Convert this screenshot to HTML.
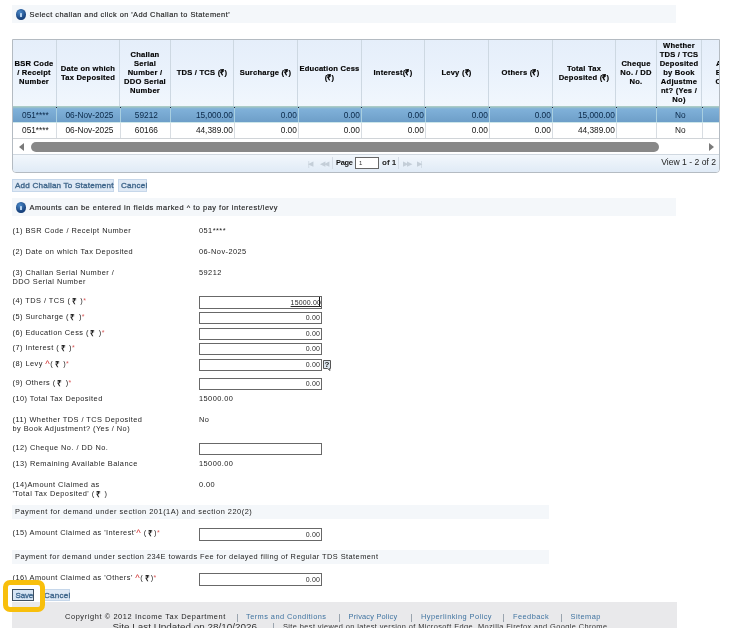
<!DOCTYPE html><html><head><meta charset="utf-8"><style>
*{margin:0;padding:0;box-sizing:border-box}
html,body{width:741px;height:628px;overflow:hidden;background:#fff;font-family:"Liberation Sans",sans-serif;color:#333}
.a{position:absolute;white-space:nowrap}
.info{position:absolute;left:12px;width:664px;height:18px;background:#f4f7fa}
.ic{position:absolute;left:4px;width:9.5px;height:10.5px;border-radius:50%;background:radial-gradient(circle at 40% 30%,#4a88c8,#1a4580 65%,#153a6e 100%)}
.ic:after{content:"";position:absolute;left:4px;top:3.5px;width:1.5px;height:4.5px;background:#b8d4f0;border-radius:0.5px}
.it{position:absolute;left:17.5px;top:1px;font-size:7.4px;letter-spacing:0.45px;line-height:18px;color:#1e1e1e;-webkit-text-stroke:0.15px #1e1e1e}
#grid{position:absolute;left:12px;top:39px;width:708px;height:134px;border:1px solid #b4bbc2;border-radius:0 0 4px 4px;overflow:hidden;background:#fff}
.hc{position:absolute;top:0;height:66px;border-right:1px solid #cdd8e2;background:linear-gradient(#e5eefa,#eaf2fc 50%,#f1f7fd);text-align:center;font-weight:bold;font-size:7.6px;letter-spacing:0.22px;line-height:9px;color:#000;-webkit-text-stroke:0.15px #000;white-space:normal;overflow:hidden}
.hc{display:flex;align-items:center;justify-content:center;padding-bottom:1px}
.rw{position:absolute;left:0;width:708px;height:16px}
.sel{height:17px;background:linear-gradient(#b4d2ca 0,#a2c6c4 1px,#8cb9d0 2px,#80b1d9 3px,#6e9fc9 15.5px,#cde6ea 16px)}
.c{position:absolute;top:0;height:16px;line-height:15px;font-size:8.3px;border-right:1px solid #d8dde2;padding:0 1.2px 0 3px;color:#151515;white-space:nowrap;overflow:hidden}
.sel .c{color:#0a2848;border-right-color:#a8cfe0;padding-top:2px}
.r{text-align:right}.m{text-align:center}
.lbl{position:absolute;left:12.5px;font-size:7.4px;letter-spacing:0.45px;line-height:9px;color:#222;white-space:nowrap}
.val{position:absolute;left:199px;font-size:7.4px;letter-spacing:0.45px;line-height:9px;color:#222;white-space:nowrap}
.inp{position:absolute;left:199px;width:123px;height:13px;border:1px solid #686868;background:#fff;font-size:7px;letter-spacing:0.15px;line-height:11px;text-align:right;padding-right:1px;color:#2a2a2a}
.inp u{text-decoration-thickness:1px;text-underline-offset:1px}
.cur{display:inline-block;width:1px;height:9px;background:#111;vertical-align:-1px;margin-left:-2px}
.req{color:#d85a5a;font-size:7px}
.car{color:#d03030;font-size:9.5px;letter-spacing:0;vertical-align:-1px;line-height:0;margin-right:0.5px}
.rs{font-size:8.2px;font-weight:bold;color:#222;margin:0 0.5px 0 1.5px;vertical-align:-1px;line-height:0}
.sec{position:absolute;left:12px;width:537px;height:13px;background:#f4f7fa;font-size:7.4px;letter-spacing:0.52px;line-height:11px;padding-left:3px;color:#222}
.btn{position:absolute;height:12px;background:#dfe9f5;border:1px solid #c6d7ea;color:#41698f;font-size:8.1px;letter-spacing:0.2px;line-height:11px;padding:0 2px;white-space:nowrap;-webkit-text-stroke:0.35px #41698f}
.foot{position:absolute;left:12px;top:602px;width:665px;height:30px;background:#e9e9eb}
.lnk{color:#3d77a8}
</style></head><body><div id="w" style="position:absolute;left:0;top:0;width:741px;height:628px;will-change:transform">
<div class="info" style="top:5px"><div class="ic" style="top:4px"></div><div class="it">Select challan and click on 'Add Challan to Statement'</div></div>
<div id="grid">
<div class="hc" style="left:-1px;width:45px"><span>BSR Code<br>/ Receipt<br>Number</span></div>
<div class="hc" style="left:44px;width:63px"><span>Date on which<br>Tax Deposited</span></div>
<div class="hc" style="left:107px;width:51px"><span>Challan<br>Serial<br>Number /<br>DDO Serial<br>Number</span></div>
<div class="hc" style="left:158px;width:63px"><span>TDS / TCS (&#8377;)</span></div>
<div class="hc" style="left:221px;width:64px"><span>Surcharge (&#8377;)</span></div>
<div class="hc" style="left:285px;width:64px"><span>Education Cess<br>(&#8377;)</span></div>
<div class="hc" style="left:349px;width:63px"><span>Interest(&#8377;)</span></div>
<div class="hc" style="left:412px;width:64px"><span>Levy (&#8377;)</span></div>
<div class="hc" style="left:476px;width:64px"><span>Others (&#8377;)</span></div>
<div class="hc" style="left:540px;width:63px"><span>Total Tax<br>Deposited (&#8377;)</span></div>
<div class="hc" style="left:603px;width:41px"><span>Cheque<br>No. / DD<br>No.</span></div>
<div class="hc" style="left:644px;width:45px"><span>Whether<br>TDS / TCS<br>Deposited<br>by Book<br>Adjustme<br>nt? (Yes /<br>No)</span></div>
<div class="hc" style="left:689px;width:59px"><span>Amount<br>Balance<br>Claimed</span></div>
<div class="rw sel" style="top:66px">
<div class="c m" style="left:0px;width:44px">051****</div>
<div class="c m" style="left:44px;width:64px">06-Nov-2025</div>
<div class="c m" style="left:108px;width:50px">59212</div>
<div class="c r" style="left:158px;width:64px">15,000.00</div>
<div class="c r" style="left:222px;width:64px">0.00</div>
<div class="c r" style="left:286px;width:63px">0.00</div>
<div class="c r" style="left:349px;width:64px">0.00</div>
<div class="c r" style="left:413px;width:64px">0.00</div>
<div class="c r" style="left:477px;width:63px">0.00</div>
<div class="c r" style="left:540px;width:64px">15,000.00</div>
<div class="c m" style="left:604px;width:40px"></div>
<div class="c m" style="left:644px;width:46px">No</div>
<div class="c m" style="left:690px;width:58px"></div>
</div>
<div class="rw" style="top:83px">
<div class="c m" style="left:0px;width:44px">051****</div>
<div class="c m" style="left:44px;width:64px">06-Nov-2025</div>
<div class="c m" style="left:108px;width:50px">60166</div>
<div class="c r" style="left:158px;width:64px">44,389.00</div>
<div class="c r" style="left:222px;width:64px">0.00</div>
<div class="c r" style="left:286px;width:63px">0.00</div>
<div class="c r" style="left:349px;width:64px">0.00</div>
<div class="c r" style="left:413px;width:64px">0.00</div>
<div class="c r" style="left:477px;width:63px">0.00</div>
<div class="c r" style="left:540px;width:64px">44,389.00</div>
<div class="c m" style="left:604px;width:40px"></div>
<div class="c m" style="left:644px;width:46px">No</div>
<div class="c m" style="left:690px;width:58px"></div>
</div>
<div class="a" style="left:43px;top:67px;width:1px;height:1px;background:#223"></div>
<div class="a" style="left:107px;top:67px;width:1px;height:1px;background:#223"></div>
<div class="a" style="left:157px;top:67px;width:1px;height:1px;background:#223"></div>
<div class="a" style="left:221px;top:67px;width:1px;height:1px;background:#223"></div>
<div class="a" style="left:285px;top:67px;width:1px;height:1px;background:#223"></div>
<div class="a" style="left:348px;top:67px;width:1px;height:1px;background:#223"></div>
<div class="a" style="left:412px;top:67px;width:1px;height:1px;background:#223"></div>
<div class="a" style="left:476px;top:67px;width:1px;height:1px;background:#223"></div>
<div class="a" style="left:539px;top:67px;width:1px;height:1px;background:#223"></div>
<div class="a" style="left:603px;top:67px;width:1px;height:1px;background:#223"></div>
<div class="a" style="left:643px;top:67px;width:1px;height:1px;background:#223"></div>
<div class="a" style="left:689px;top:67px;width:1px;height:1px;background:#223"></div>
<div class="a" style="left:0;top:98px;width:708px;height:1px;background:#d0d4d8"></div>
<div class="a" style="left:6px;top:103px;width:0;height:0;border-top:4.5px solid transparent;border-bottom:4.5px solid transparent;border-right:5px solid #7a7a7a"></div>
<div class="a" style="left:18px;top:102px;width:628px;height:10px;border-radius:5px;background:#888"></div>
<div class="a" style="left:696px;top:103px;width:0;height:0;border-top:4.5px solid transparent;border-bottom:4.5px solid transparent;border-left:5px solid #7a7a7a"></div>
<div class="a" style="left:0;top:114px;width:708px;height:1px;background:#d0d8e0"></div>
<div class="a" style="left:0;top:115px;width:708px;height:18px;background:linear-gradient(#f2f7fc,#dfeaf6)"></div>
<div class="a" style="left:295px;top:115px;font-size:6.5px;line-height:17px;color:#c4ced8;letter-spacing:-1.5px">|&#9664;</div>
<div class="a" style="left:307px;top:115px;font-size:6.5px;line-height:17px;color:#c4ced8;letter-spacing:-1.5px">&#9664;&#9664;</div>
<div class="a" style="left:319px;top:117px;width:1px;height:12px;background:#d4dce6"></div>
<div class="a" style="left:323px;top:114px;font-size:7.4px;line-height:17px;font-weight:bold;letter-spacing:-0.3px;color:#111">Page</div>
<div class="a" style="left:342px;top:117px;width:24px;height:12px;border:1px solid #666;background:#fff;font-size:6px;line-height:10px;padding-left:3px;color:#333">1</div>
<div class="a" style="left:369px;top:114px;font-size:8px;line-height:17px;font-weight:bold;color:#222">of 1</div>
<div class="a" style="left:385px;top:117px;width:1px;height:12px;background:#d4dce6"></div>
<div class="a" style="left:390px;top:115px;font-size:6.5px;line-height:17px;color:#c4ced8;letter-spacing:-1.5px">&#9654;&#9654;</div>
<div class="a" style="left:404px;top:115px;font-size:6.5px;line-height:17px;color:#c4ced8;letter-spacing:-1.5px">&#9654;|</div>
<div class="a" style="right:3px;top:114px;font-size:8.6px;line-height:17px;color:#222">View 1 - 2 of 2</div>
</div>
<div class="btn" style="left:12px;top:179px;width:102px;height:13px;line-height:12px;color:#3d5f80">Add Challan To Statement</div>
<div class="btn" style="left:118px;top:179px;width:29px;height:13px;line-height:12px;color:#3d5f80">Cancel</div>
<div class="info" style="top:198px"><div class="ic" style="top:4px"></div><div class="it" style="letter-spacing:0.52px">Amounts can be entered in fields marked ^ to pay for interest/levy</div></div>
<div class="lbl" style="top:226px">(1) BSR Code / Receipt Number</div>
<div class="lbl" style="top:247px">(2) Date on which Tax Deposited</div>
<div class="lbl" style="top:268px">(3) Challan Serial Number /<br>DDO Serial Number</div>
<div class="lbl" style="top:296px">(4) TDS / TCS (<b class="rs">&#8377;</b> )<span class="req">*</span></div>
<div class="lbl" style="top:312px">(5) Surcharge (<b class="rs">&#8377;</b> )<span class="req">*</span></div>
<div class="lbl" style="top:328px">(6) Education Cess (<b class="rs">&#8377;</b> )<span class="req">*</span></div>
<div class="lbl" style="top:343px">(7) Interest (<b class="rs">&#8377;</b> )<span class="req">*</span></div>
<div class="lbl" style="top:359px">(8) Levy <span class="car">^</span>(<b class="rs">&#8377;</b> )<span class="req">*</span></div>
<div class="lbl" style="top:378px">(9) Others (<b class="rs">&#8377;</b> )<span class="req">*</span></div>
<div class="lbl" style="top:394px">(10) Total Tax Deposited</div>
<div class="lbl" style="top:415px">(11) Whether TDS / TCS Deposited<br>by Book Adjustment? (Yes / No)</div>
<div class="lbl" style="top:443px">(12) Cheque No. / DD No.</div>
<div class="lbl" style="top:459px">(13) Remaining Available Balance</div>
<div class="lbl" style="top:480px">(14)Amount Claimed as<br>'Total Tax Deposited' (<b class="rs">&#8377;</b> )</div>
<div class="lbl" style="top:528px">(15) Amount Claimed as 'Interest'<span class="car">^</span> (<b class="rs">&#8377;</b>)<span class="req">*</span></div>
<div class="lbl" style="top:573px">(16) Amount Claimed as 'Others' <span class="car">^</span>(<b class="rs">&#8377;</b>)<span class="req">*</span></div>
<div class="val" style="top:226px">051****</div>
<div class="val" style="top:247px">06-Nov-2025</div>
<div class="val" style="top:268px">59212</div>
<div class="val" style="top:394px">15000.00</div>
<div class="val" style="top:415px">No</div>
<div class="val" style="top:459px">15000.00</div>
<div class="val" style="top:480px">0.00</div>
<div class="inp" style="top:296px;height:13px;line-height:11px"><u>15000.00</u><span class="cur"></span></div>
<div class="inp" style="top:312px;height:12px;line-height:10px">0.00</div>
<div class="inp" style="top:328px;height:12px;line-height:10px">0.00</div>
<div class="inp" style="top:343px;height:12px;line-height:10px">0.00</div>
<div class="inp" style="top:359px;height:12px;line-height:10px">0.00</div>
<div class="inp" style="top:378px;height:12px;line-height:10px">0.00</div>
<div class="inp" style="top:443px;height:12px;line-height:10px"></div>
<div class="inp" style="top:528px;height:13px;line-height:11px">0.00</div>
<div class="inp" style="top:573px;height:13px;line-height:11px">0.00</div>
<svg class="a" style="left:322px;top:359px" width="10" height="13" viewBox="0 0 10 13"><path d="M1.5 1.5 H8.5 V9.5 H7.5 L8 11.5 L5.5 9.5 H1.5 Z" fill="#dde6ee" stroke="#555" stroke-width="1"/><text x="5" y="8.3" font-family="Liberation Sans" font-weight="bold" font-size="8" text-anchor="middle" fill="#222">?</text></svg>
<div class="sec" style="top:505px;height:14px;padding-top:1px">Payment for demand under section 201(1A) and section 220(2)</div>
<div class="sec" style="top:550px;height:14px;padding-top:1px;letter-spacing:0.45px">Payment for demand under section 234E towards Fee for delayed filing of Regular TDS Statement</div>
<div class="btn" style="left:12px;top:589px;width:22px;height:12px;border-color:#3e5062;font-size:8px;letter-spacing:-0.2px;padding-left:2.5px;color:#3a6590;background:#d6e4f3">Save</div>
<div class="btn" style="left:40px;top:589px;width:30px;height:12px;color:#3d5f80;padding-left:3px">Cancel</div>
<div class="foot"></div>
<div class="a" style="left:65px;top:612px;font-size:7.4px;letter-spacing:0.45px;line-height:10px;color:#222;letter-spacing:0.6px">Copyright &copy; 2012 Income Tax Department</div>
<div class="a" style="left:237px;top:614px;width:1px;height:8px;background:#9aa4ae"></div>
<div class="a" style="left:339px;top:614px;width:1px;height:8px;background:#9aa4ae"></div>
<div class="a" style="left:411px;top:614px;width:1px;height:8px;background:#9aa4ae"></div>
<div class="a" style="left:503px;top:614px;width:1px;height:8px;background:#9aa4ae"></div>
<div class="a" style="left:561px;top:614px;width:1px;height:8px;background:#9aa4ae"></div>
<div class="a" style="left:246px;top:612px;font-size:7.4px;letter-spacing:0.45px;line-height:10px;color:#3f73a0;">Terms and Conditions</div>
<div class="a" style="left:348.5px;top:612px;font-size:7.4px;letter-spacing:0.45px;line-height:10px;color:#3f73a0;letter-spacing:0.2px">Privacy Policy</div>
<div class="a" style="left:421px;top:612px;font-size:7.4px;letter-spacing:0.45px;line-height:10px;color:#3f73a0;">Hyperlinking Policy</div>
<div class="a" style="left:513px;top:612px;font-size:7.4px;letter-spacing:0.45px;line-height:10px;color:#3f73a0;">Feedback</div>
<div class="a" style="left:570.5px;top:612px;font-size:7.4px;letter-spacing:0.45px;line-height:10px;color:#3f73a0;">Sitemap</div>
<div class="a" style="left:112.5px;top:621px;font-size:9.9px;line-height:12px;color:#333">Site Last Updated on 28/10/2026</div>
<div class="a" style="left:273px;top:623px;width:1px;height:7px;background:#9aa4ae"></div>
<div class="a" style="left:283px;top:621.5px;font-size:7.4px;letter-spacing:0.45px;line-height:10px;color:#333;letter-spacing:0.4px">Site best viewed on latest version of Microsoft Edge, Mozilla Firefox and Google Chrome</div>
<div class="a" style="left:3px;top:580px;width:42px;height:32px;border:5px solid #f8bf0c;border-radius:7px"></div>
</div></body></html>
